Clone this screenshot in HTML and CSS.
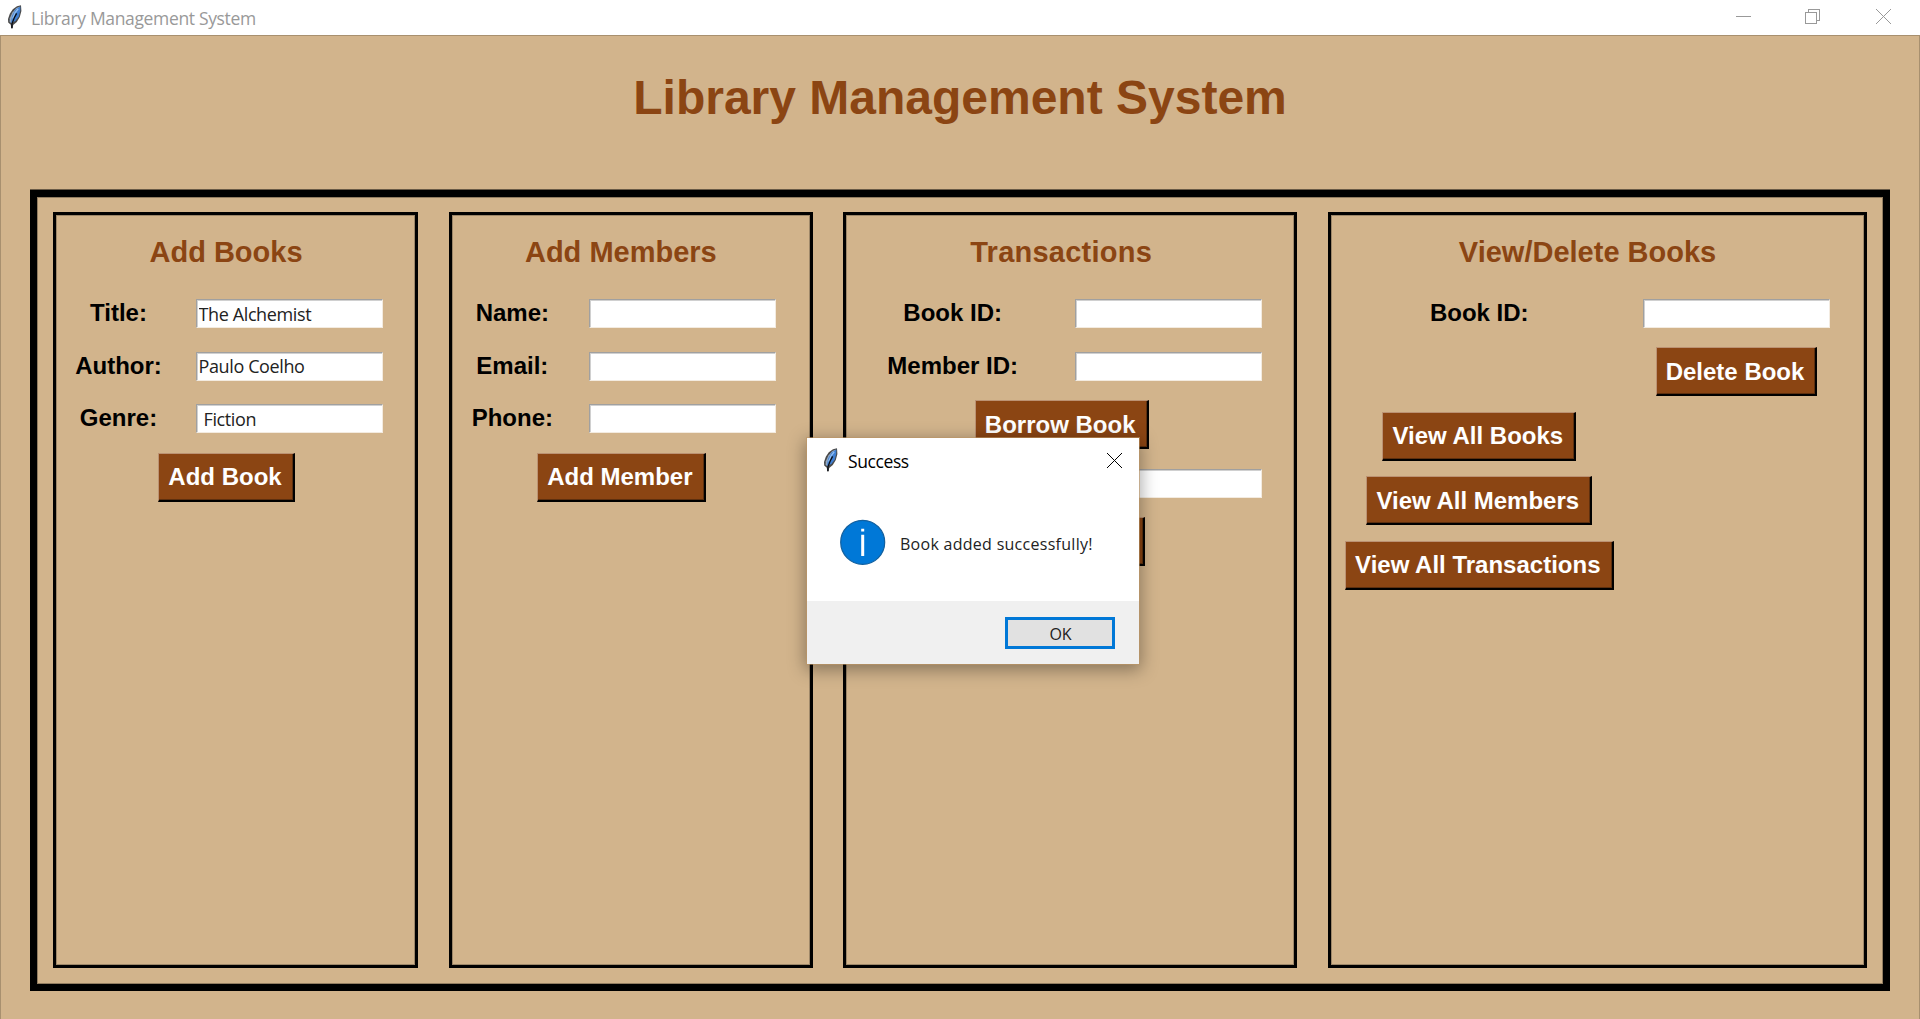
FILE: index.html
```html
<!DOCTYPE html>
<html lang="en">
<head>
<meta charset="utf-8">
<title>Library Management System</title>
<link rel="stylesheet" href="styles.css">
</head>
<body>
<svg class="defs" width="0" height="0">
  <symbol id="feather" viewBox="0 0 14 24">
    <path d="M13 .2 9 1.2 4.8 4.2 1.8 8.8 0 14 .2 17.6 2.8 19.8 3.2 23.6H4.6L5.2 20 8.8 17 11.8 12 13.4 6Z" fill="#4a4a4a"/>
    <path d="M12 1.4 8.4 3 4.4 7.4 1.8 13.2 1.6 16.8 3.6 18.4Z" fill="#93a9c4"/>
    <path d="M12.4 1.4 7.4 4.6 4 11 3 18 7.4 16 10.8 11.4 12.2 6Z" fill="#3f7fd2"/>
    <path d="M10.2 3.8 7 7.8 4.6 13.6" fill="none" stroke="#8fbcee" stroke-width="1.4"/>
    <path d="M8.6 8.4 6.2 13 4 18.6 3.9 23" fill="none" stroke="#0a0d14" stroke-width="1.3"/>
  </symbol>
</svg>
<div class="window">
  <header class="titlebar">
    <svg class="feather" width="14" height="24"><use href="#feather"/></svg>
    <span class="titlebar-text">Library Management System</span>
    <svg class="controls" width="155" height="15" viewBox="0 0 155 15" fill="none" stroke="#999" shape-rendering="crispEdges">
      <path d="M0 7.5H15M69.5 3.5H80.5V14.5H69.5ZM72.5 3V.5H83.5V11.5H81"/>
      <path d="M140 0 155 15M155 0 140 15" shape-rendering="auto"/>
    </svg>
  </header>
  <main class="client">
    <h1 class="page-title">Library Management System</h1>
    <div class="frame">
      <section class="panel panel-books">
        <h2 class="heading">Add Books</h2>
        <label class="label">Title:</label><input class="entry" value="The Alchemist">
        <label class="label">Author:</label><input class="entry" value="Paulo Coelho">
        <label class="label">Genre:</label><input class="entry entry-indent" value="Fiction">
        <button class="btn wide">Add Book</button>
      </section>
      <section class="panel panel-members">
        <h2 class="heading">Add Members</h2>
        <label class="label">Name:</label><input class="entry">
        <label class="label">Email:</label><input class="entry">
        <label class="label">Phone:</label><input class="entry">
        <button class="btn wide">Add Member</button>
      </section>
      <section class="panel panel-transactions">
        <h2 class="heading heading-spaced">Transactions</h2>
        <label class="label">Book ID:</label><input class="entry">
        <label class="label">Member ID:</label><input class="entry">
        <button class="btn wide">Borrow Book</button>
        <span></span><input class="entry">
        <button class="btn wide">Return Book</button>
      </section>
      <section class="panel panel-view">
        <h2 class="heading">View/Delete Books</h2>
        <label class="label">Book ID:</label><input class="entry">
        <button class="btn right">Delete Book</button>
        <button class="btn left">View All Books</button>
        <button class="btn left">View All Members</button>
        <button class="btn left">View All Transactions</button>
      </section>
    </div>
  </main>
  <div class="dialog" role="dialog">
    <div class="dialog-title">
      <svg class="feather" width="14" height="24"><use href="#feather"/></svg>
      <span class="dialog-name">Success</span>
      <svg class="dialog-close" width="15" height="15" viewBox="0 0 15 15" stroke="#000"><path d="M0 0 15 15M15 0 0 15"/></svg>
    </div>
    <div class="dialog-body">
      <svg width="46" height="46" viewBox="0 0 46 46">
        <circle cx="22.7" cy="23.3" r="22" fill="#0078d7" stroke="#12609f" stroke-width="1.2"/>
        <path d="M21.2 9.8H24.2V12.6H21.2ZM21.2 15.8H24.2V37H21.2Z" fill="#fff"/>
      </svg>
      <span class="message">Book added successfully!</span>
    </div>
    <div class="dialog-footer"><button class="ok">OK</button></div>
  </div>
</div>
</body>
</html>
```
FILE: styles.css
```css
* { box-sizing: border-box; }
body { margin: 0; overflow: hidden; font-family: "Liberation Sans", Arial, sans-serif; }
.defs { position: absolute; }
.window { position: relative; width: 1920px; height: 1019px; display: flex; flex-direction: column; background: #d2b48c; }
.titlebar { height: 35px; display: flex; align-items: flex-start; padding: 5px 29px 0 8px; background: #fff; }
.feather { flex: none; display: block; }
.titlebar-text { margin: 0 auto 0 9px; font: 17.5px/27px "Open Sans", "Noto Sans", sans-serif; letter-spacing: -.34px; color: #999; }
.controls { margin-top: 4px; }
.client { flex: 1; display: flex; flex-direction: column; padding: 0 29px 28px; border: 1px solid #a8906f; border-bottom: 0; }
.page-title { margin: 34px 0 0; height: 120px; text-align: center; font-size: 48px; line-height: 56px; font-weight: bold; color: #8b4513; }
.frame { flex: 1; display: grid; grid-template-columns: 365px 364px 454px 539px; column-gap: 30.6px; padding: 15px 16px 16px; border: 7px solid #000; box-shadow: inset 0 0 0 1px rgba(0,0,0,.3), 0 -1px 0 rgba(0,0,0,.5); }
.panel { display: grid; grid-auto-rows: min-content; align-content: start; justify-items: center; border: 3px solid #000; box-shadow: inset 0 0 0 1px rgba(0,0,0,.25); }
.panel-books { grid-template-columns: 125px 216px; }
.panel-members { grid-template-columns: 121.5px 218px; }
.panel-transactions { grid-template-columns: 213px 218px; }
.panel-view { grid-template-columns: 297px 217.5px; }
.heading { grid-column: 1 / -1; margin: 0 1px 0 0; height: 72px; font-size: 29px; line-height: 74px; color: #8b4513; }
.heading-spaced { letter-spacing: .25px; }
.label { height: 52.6px; line-height: 52px; font-size: 24px; font-weight: bold; color: #000; }
.entry { width: 187px; height: 29px; margin: 12px 0 11.6px; padding: 0 2px; border: 1px solid; border-color: #a0a0a0 #f3ebe0 #f3ebe0 #a0a0a0; border-radius: 0; background: #fff; box-shadow: inset 1px 1px 0 #d0d0d0; font: 18px/26px "Open Sans", "Noto Sans", sans-serif; letter-spacing: -.38px; color: #222; outline: 0; }
.entry-indent { padding-left: 7px; }
.btn { height: 49px; margin: 7.9px 0 7.5px; padding: 0 11px 0 9px; border: 1px solid; border-color: #bc9273 #000 #000 #bc9273; border-width: 1px 2px 2px 1px; border-radius: 0; background: #8b4513; box-shadow: inset -1px -1px 0 #5d2f0e; font: bold 24px/45px "Liberation Sans", Arial, sans-serif; color: #fff; white-space: nowrap; }
.wide { grid-column: 1 / -1; }
.left { grid-column: 1; }
.right { grid-column: 2; }
.dialog { position: absolute; left: 807px; top: 438px; width: 332px; height: 226px; display: flex; flex-direction: column; background: #fff; box-shadow: 0 0 0 1px rgba(190,150,100,.6), 0 4px 16px 2px rgba(0,0,0,.35); font-family: "Open Sans", "Noto Sans", sans-serif; }
.dialog-title { height: 44px; display: flex; align-items: flex-start; padding: 10px 17px 0; }
.dialog-name { margin: 0 auto 0 10px; font-size: 17.5px; line-height: 27px; letter-spacing: -.4px; }
.dialog-close { margin-top: 5px; }
.dialog-body { flex: 1; display: flex; align-items: flex-start; padding: 37px 0 0 33px; }
.message { margin-left: 14px; font-size: 16px; line-height: 50px; letter-spacing: .28px; color: #222; white-space: nowrap; }
.dialog-footer { height: 63px; display: flex; justify-content: flex-end; padding: 16px 24px 0 0; background: #f0f0f0; }
.ok { width: 110px; height: 32px; padding: 2px 0 0 1px; border: 3px solid #0078d7; border-radius: 0; background: #e1e1e1; font: 16px/24px "Open Sans", "Noto Sans", sans-serif; color: #222; }
```
